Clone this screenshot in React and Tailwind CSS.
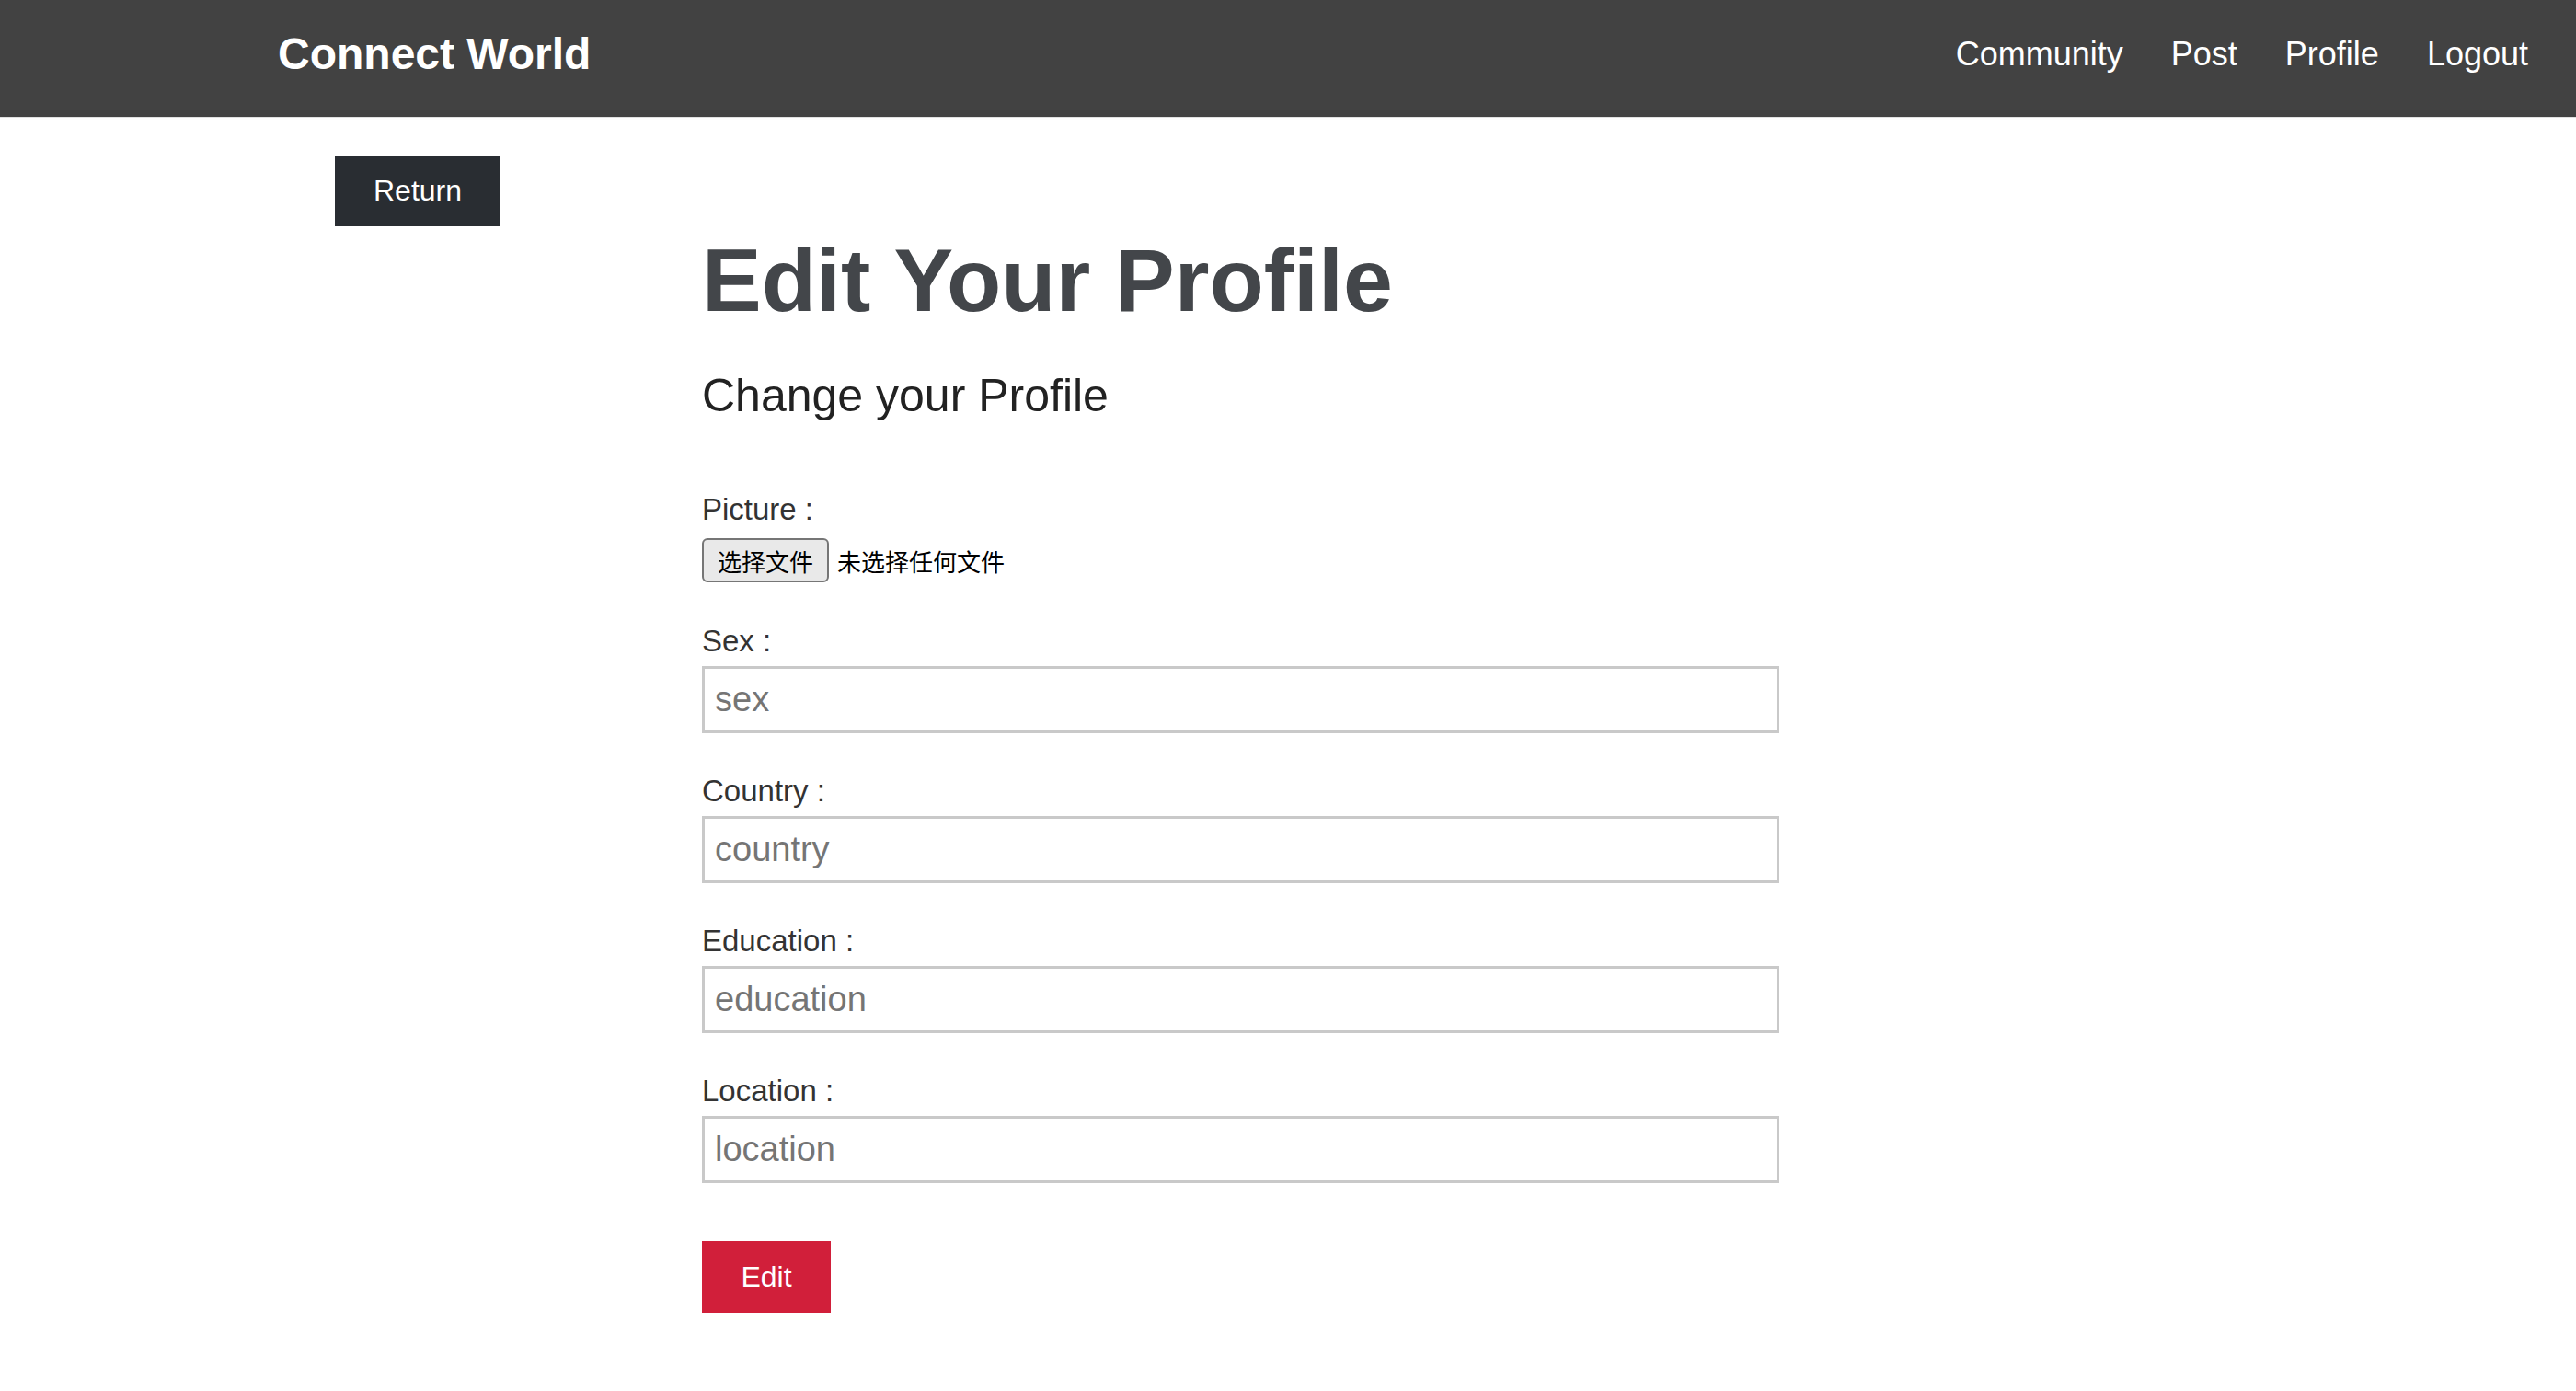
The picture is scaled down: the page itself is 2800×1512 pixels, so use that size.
import React from "react";

const font = { fontFamily: '"Liberation Sans", Arial, "Noto Sans CJK SC", sans-serif' };

function Field({ label, placeholder, first }) {
  return (
    <div className={first ? "mt-[44px]" : "mt-[43px]"}>
      <div className="text-[33px] leading-[40px] text-[#333333]">{label} :</div>
      <input
        type="text"
        placeholder={placeholder}
        className="mt-[7px] block h-[73px] w-[1171px] border-[3px] border-[#c9c9c9] bg-white pl-[11px] text-[38px] text-[#333] outline-none placeholder:text-[#757575]"
        style={font}
      />
    </div>
  );
}

export default function App() {
  return (
    <div className="min-h-[1512px] bg-white" style={font}>
      <nav className="box-border flex h-[128px] items-center justify-between border-b border-[#e0e0e0] bg-[#424242] pb-[10px] pl-[302px] pr-[26px]">
        <div className="text-[48px] font-bold leading-none text-white">Connect World</div>
        <div className="flex items-center">
          {["Community", "Post", "Profile", "Logout"].map((l) => (
            <a key={l} className="px-[26px] text-[36px] leading-none text-white">
              {l}
            </a>
          ))}
        </div>
      </nav>

      <div className="ml-[364px] mt-[42px]">
        <button className="flex h-[76px] w-[180px] items-center justify-center bg-[#292d32] pb-[2px] text-[32px] text-white" style={font}>
          Return
        </button>
      </div>

      <div className="ml-[763px] mt-[1px] w-[1171px]">
        <h1 className="text-[97px] font-bold leading-[115px] text-[#43464a]">Edit Your Profile</h1>
        <h2 className="mt-[39px] text-[50px] leading-[58px] text-[#222222]">Change your Profile</h2>

        <div className="mt-[75px]">
          <div className="text-[33px] leading-[40px] text-[#333333]">Picture :</div>
          <div className="mt-[11px] flex items-center">
            <div
              className="box-border flex h-[48px] w-[138px] items-center justify-center rounded-[6px] border-2 border-[#767676] bg-[#e9e9e9] text-[26px] text-black"
              style={{ fontFamily: '"Noto Sans CJK SC", sans-serif' }}
            >
              选择文件
            </div>
            <span
              className="ml-[9px] text-[26px] text-black"
              style={{ fontFamily: '"Noto Sans CJK SC", sans-serif' }}
            >
              未选择任何文件
            </span>
          </div>
        </div>

        <Field label="Sex" placeholder="sex" first />
        <Field label="Country" placeholder="country" />
        <Field label="Education" placeholder="education" />
        <Field label="Location" placeholder="location" />

        <button
          className="mt-[63px] flex h-[78px] w-[140px] items-center justify-center bg-[#d11f3a] text-[32px] text-white"
          style={font}
        >
          Edit
        </button>
      </div>
    </div>
  );
}
